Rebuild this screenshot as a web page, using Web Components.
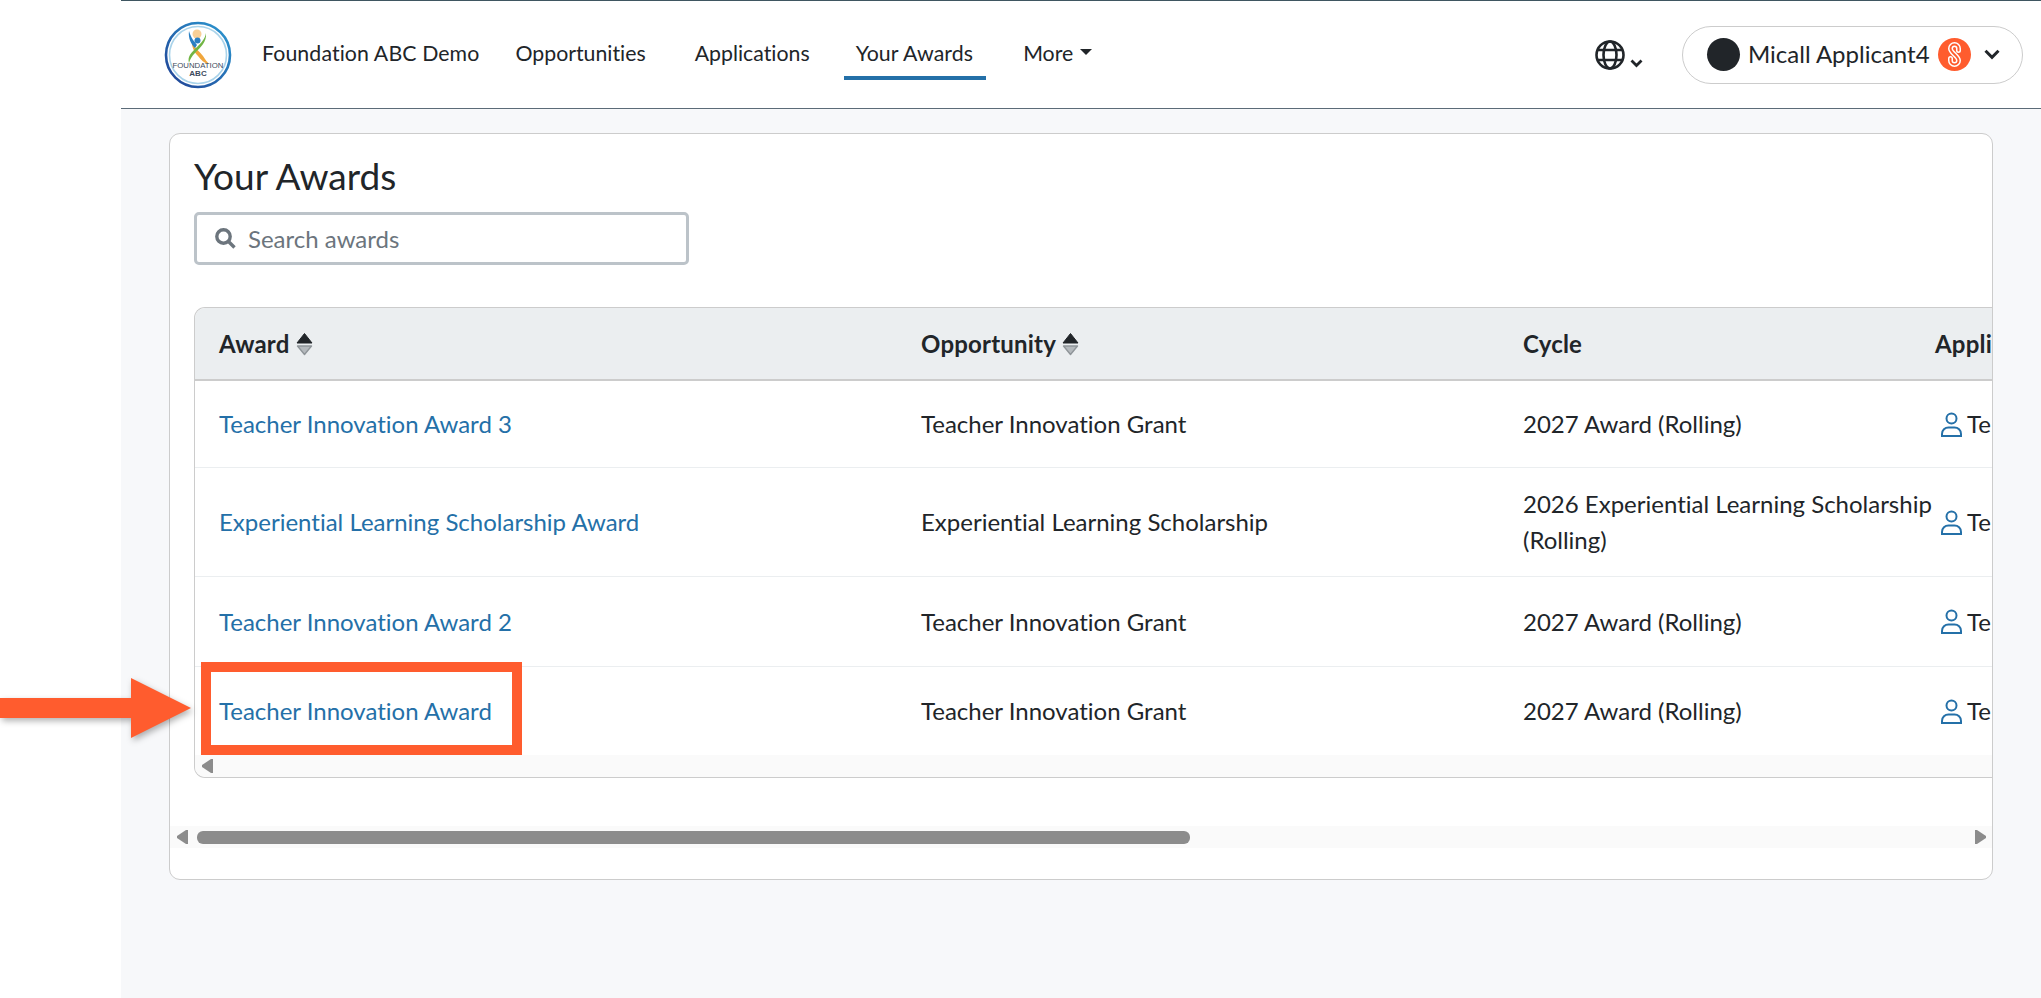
<!DOCTYPE html>
<html>
<head>
<meta charset="utf-8">
<title>Your Awards</title>
<style>
	html, body { margin: 0; height: 100%; }
	body { font-family: Lato, "Liberation Sans", sans-serif; font-variant-ligatures: none; font-variant-numeric: tabular-nums; color: #212529; background: #fff; overflow: hidden; }
</style>
</head>
<body>
<template id="personIcon">
	<svg width="21" height="25" viewBox="0 0 21 25" fill="none" stroke="#2470a8" stroke-width="2"><circle cx="10.500" cy="6.500" r="5"/><path d="M1 24v-2c0-4 3-6.500 6.500-6.500h6c3.500 0 6.500 2.500 6.500 6.500v2z"/></svg>
</template>

<app-shell>
	<nav-bar></nav-bar>
	<award-card>
		<awards-table>
			<award-row slot="rows" style="--row-h:87px" award="Teacher Innovation Award 3" opportunity="Teacher Innovation Grant" cycle="2027 Award (Rolling)"></award-row>
			<award-row slot="rows" style="--row-h:109px" award="Experiential Learning Scholarship Award" opportunity="Experiential Learning Scholarship" cycle="2026 Experiential Learning Scholarship (Rolling)"></award-row>
			<award-row slot="rows" style="--row-h:90px" award="Teacher Innovation Award 2" opportunity="Teacher Innovation Grant" cycle="2027 Award (Rolling)"></award-row>
			<award-row slot="rows" style="--row-h:88px" last award="Teacher Innovation Award" opportunity="Teacher Innovation Grant" cycle="2027 Award (Rolling)"></award-row>
		</awards-table>
	</award-card>
	<callout-marker></callout-marker>
</app-shell>

<script>
class AppShell extends HTMLElement {
	constructor() {
		super();
		this.attachShadow({ mode: 'open' });
		this.shadowRoot.innerHTML = `
			<style>
				:host { display: block; height: 100vh; position: relative; overflow: hidden; }
				#main { margin-left: 121px; height: 100%; background: #f7f8fa; }
			</style>
			<div id="main">
				<slot></slot>
			</div>
		`;
	}
}

class NavBar extends HTMLElement {
	constructor() {
		super();
		this.attachShadow({ mode: 'open' });
		this.shadowRoot.innerHTML = `
			<style>
				:host { display: flex; align-items: center; height: 107px; background: #fff; border-top: 1px solid #3f5661; border-bottom: 1px solid #5b6b78; font-size: 21.3px; }
				#logo { margin-left: 43px; flex: none; display: block; }
				a { color: #212529; text-decoration: none; white-space: nowrap; }
				#brand { margin-left: 30px; padding-bottom: 3px; letter-spacing: 0.1px; }
				#links { display: flex; align-items: center; margin-left: 24px; }
				.link { display: flex; align-items: center; padding: 1px 12px 0; margin-right: 25px; height: 50px; box-sizing: border-box; border-bottom: 4px solid transparent; }
				.link:nth-child(2) { margin-right: 22px; }
				.link.on { border-bottom-color: #2470a8; letter-spacing: 0.1px; padding-right: 13px; }
				.caret { display: inline-block; margin-left: 7px; border-top: 6px solid #212529; border-left: 6px solid transparent; border-right: 6px solid transparent; position: relative; top: -1px; }
				#right { margin-left: auto; display: flex; align-items: center; margin-right: 18px; }
				#globe { display: flex; align-items: flex-end; margin-right: 39px; }
				#pill { display: flex; align-items: center; height: 58px; box-sizing: border-box; width: 341px; padding-left: 24px; border: 1px solid #ccc; border-radius: 29px; }
				#avatar { width: 33px; height: 33px; border-radius: 50%; background: #212529; flex: none; }
				#name { margin-left: 8px; font-size: 24px; white-space: nowrap; padding-bottom: 3px; }
				#badge { margin-left: 8px; flex: none; display: block; }
				#chev { margin-left: 13px; flex: none; display: block; }
			</style>
			<svg id="logo" width="68" height="68" viewBox="0 0 68 68">
				<defs>
					<linearGradient id="ring" x1="0" y1="1" x2="1" y2="0"><stop offset="0" stop-color="#1f3f93"/><stop offset="1" stop-color="#2c9ad2"/></linearGradient>
				</defs>
				<circle cx="34" cy="34" r="32" fill="#fff" stroke="url(#ring)" stroke-width="2.6"/>
				<circle cx="34" cy="34" r="28.5" fill="none" stroke="#a9d3ea" stroke-width="1.6"/>
				<circle cx="33" cy="13" r="4.500" fill="#f8cf96"/>
				<path d="M28 22c3 5 8 9 11 13 2 3 4 6 6 8-5-1-8-4-11-8-3-3-6-8-6-13z" fill="#f0a63c"/>
				<path d="M25 10c2 7 5 10 8 14l-2 3c-4-4-7-10-6-17z" fill="#2a7fc2"/>
				<path d="M42 12c1 9-6 15-11 20-3 3-5 6-6 10-2-7 3-11 8-16 4-4 8-8 9-14z" fill="#71b544"/>
				<circle cx="33.500" cy="19.500" r="3" fill="#2a7fc2"/>
				<text x="34" y="47" text-anchor="middle" font-family="'Liberation Sans',sans-serif" font-size="7.800" fill="#3b4a5c">FOUNDATION</text>
				<text x="34" y="55" text-anchor="middle" font-family="'Liberation Sans',sans-serif" font-size="8" font-weight="700" fill="#3b4a5c">ABC</text>
			</svg>
			<a id="brand">Foundation ABC Demo</a>
			<div id="links">
				<a class="link">Opportunities</a>
				<a class="link">Applications</a>
				<a class="link on">Your Awards</a>
				<a class="link">More<span class="caret"></span></a>
			</div>
			<div id="right">
				<div id="globe">
					<svg width="30" height="30" viewBox="0 0 30 30" fill="none" stroke="#212529" stroke-width="2.600"><circle cx="15" cy="15" r="13.500"/><ellipse cx="15" cy="15" rx="6.500" ry="13.500"/><path d="M3 10h24M3 20h24"/></svg>
					<svg width="13" height="9" viewBox="0 0 13 9" fill="none" stroke="#212529" stroke-width="2.800" style="margin:0 0 2px 5px"><path d="M1.500 1.500l5 5 5-5"/></svg>
				</div>
				<div id="pill">
					<span id="avatar"></span>
					<span id="name">Micall Applicant4</span>
					<svg id="badge" width="33" height="33" viewBox="0 0 33 33"><circle cx="16.500" cy="16.500" r="16.500" fill="#ff5c2e"/><g fill="none" stroke-linecap="round"><path d="M20.500 12.500V10.500a4 4 0 0 0-8 0c0 4.500 8 7.500 8 12a4 4 0 0 1-8 0V20.500" stroke="#fff" stroke-width="5"/><path d="M20.500 12.500V10.500a4 4 0 0 0-8 0c0 4.500 8 7.500 8 12a4 4 0 0 1-8 0V20.500" stroke="#ff5c2e" stroke-width="2"/></g></svg>
					<svg id="chev" width="16" height="11" viewBox="0 0 16 11" fill="none" stroke="#212529" stroke-width="3"><path d="M1.500 1.800l6.500 6.500 6.500-6.500"/></svg>
				</div>
			</div>
		`;
	}
}

class AwardCard extends HTMLElement {
	constructor() {
		super();
		this.attachShadow({ mode: 'open' });
		this.shadowRoot.innerHTML = `
			<style>
				:host { display: block; box-sizing: border-box; width: 1824px; height: 747px; margin: 24px 0 0 48px; background: #fff; border: 1px solid #ccc; border-radius: 11px; position: relative; overflow: hidden; }
				h1 { font-size: 37px; font-weight: 400; line-height: 40px; margin: 0; }
				#top { padding: 22px 0 0 24px; }
			</style>
			<div id="top">
				<h1>Your Awards</h1>
				<search-box></search-box>
			</div>
			<slot></slot>
			<scroll-track id="outer" thumb="9,993"></scroll-track>
		`;
	}
}

class SearchBox extends HTMLElement {
	constructor() {
		super();
		this.attachShadow({ mode: 'open' });
		this.shadowRoot.innerHTML = `
			<style>
				:host { display: flex; align-items: center; box-sizing: border-box; width: 495px; height: 53px; margin-top: 16px; border: 3px solid #bcc3c9; border-radius: 5px; padding-left: 18px; }
				svg { flex: none; display: block; }
				span { margin-left: 12px; font-size: 24px; color: #6c757d; }
			</style>
			<svg width="21" height="21" viewBox="0 0 21 21" fill="none" stroke="#6c757d" stroke-width="3.400"><circle cx="8.500" cy="8.500" r="6.700"/><path d="M13.500 13.500l6 6"/></svg>
			<span>Search awards</span>
		`;
	}
}

class AwardsTable extends HTMLElement {
	constructor() {
		super();
		this.attachShadow({ mode: 'open' });
		this.shadowRoot.innerHTML = `
			<style>
				:host { display: block; box-sizing: border-box; margin: 42px 0 0 24px; width: 1798px; height: 471px; border: 1px solid #ccc; border-right: 0; border-radius: 11px 0 0 11px; overflow: hidden; position: relative; }
				#head { display: grid; grid-template-columns: 702px 602px 412px 1fr; align-items: center; height: 71px; background: #ebeef0; border-bottom: 2px solid #ccc; font-size: 24px; font-weight: 700; letter-spacing: 0.2px; white-space: nowrap; overflow: hidden; }
				#head div { padding-left: 24px; display: flex; align-items: center; }
				#head svg { margin-left: 6px; display: block; }
				#head div:first-child svg { margin-left: 7px; }
			</style>
			<div id="head">
				<div>Award<svg width="17" height="24" viewBox="0 0 17 24"><path d="M8.500 1.500l7.500 9.500H1z" fill="#212529" stroke="#212529" stroke-linejoin="round"/><path d="M1.500 14h14l-7 8.500z" fill="#b4b9bd" stroke="#8f9599" stroke-width="1.400" stroke-linejoin="round"/></svg></div>
				<div>Opportunity<svg width="17" height="24" viewBox="0 0 17 24"><path d="M8.500 1.500l7.500 9.500H1z" fill="#212529" stroke="#212529" stroke-linejoin="round"/><path d="M1.500 14h14l-7 8.500z" fill="#b4b9bd" stroke="#8f9599" stroke-width="1.400" stroke-linejoin="round"/></svg></div>
				<div>Cycle</div>
				<div>Appli</div>
			</div>
			<slot name="rows"></slot>
			<scroll-track thumb=""></scroll-track>
		`;
	}
}

class AwardRow extends HTMLElement {
	constructor() {
		super();
		this.attachShadow({ mode: 'open' });
		this.shadowRoot.innerHTML = `
			<style>
				:host { display: grid; grid-template-columns: 702px 602px 412px 1fr; align-items: center; height: var(--row-h); box-sizing: border-box; border-bottom: 1px solid #ebeef0; font-size: 24px; line-height: 36px; overflow: hidden; }
				:host([last]) { border-bottom: 0; }
				.cell { padding-left: 24px; }
				a { color: #2470a8; text-decoration: none; }
				#who { display: flex; align-items: center; gap: 5px; padding-left: 30px; }
				#who svg { display: block; flex: none; }
				#cycle { margin-right: -24px; }
			</style>
			<div class="cell"><a id="award"></a></div>
			<div class="cell" id="opp"></div>
			<div class="cell" id="cycle"></div>
			<div class="cell" id="who"><span>Te</span></div>
		`;
		const person = document.getElementById('personIcon').content.cloneNode(true);
		const who = this.shadowRoot.querySelector('#who');
		who.insertBefore(person, who.firstChild);
	}

	connectedCallback() {
		this.shadowRoot.querySelector('#award').textContent = this.getAttribute('award');
		this.shadowRoot.querySelector('#opp').textContent = this.getAttribute('opportunity');
		this.shadowRoot.querySelector('#cycle').textContent = this.getAttribute('cycle');
	}
}

class ScrollTrack extends HTMLElement {
	constructor() {
		super();
		this.attachShadow({ mode: 'open' });
		this.shadowRoot.innerHTML = `
			<style>
				:host { display: flex; align-items: center; height: 22px; background: #fafafa; }
				:host(#outer) { margin-top: 48px; }
				#thumb { height: 13px; background: #8c8c8c; border-radius: 6px; }
				svg { display: block; flex: none; }
				#left { margin-left: 7px; }
				#right { margin-left: auto; margin-right: 6px; }
			</style>
			<svg id="left" width="11" height="14" viewBox="0 0 11 14"><path d="M11 0v14H9L0 8V6l9-6z" fill="#8c8c8c"/></svg>
			<div id="thumb"></div>
			<svg id="right" width="11" height="14" viewBox="0 0 11 14"><path d="M0 0v14h2l9-6V6L2 0z" fill="#8c8c8c"/></svg>
		`;
	}

	connectedCallback() {
		const thumb = this.shadowRoot.querySelector('#thumb');
		const value = this.getAttribute('thumb');
		if (value) {
			const [gap, width] = value.split(',');
			thumb.style.marginLeft = gap + 'px';
			thumb.style.width = width + 'px';
		} else {
			thumb.style.display = 'none';
			this.shadowRoot.querySelector('#right').style.display = 'none';
		}
	}
}

// the orange arrow and box drawn over the screenshot
class CalloutMarker extends HTMLElement {
	constructor() {
		super();
		this.attachShadow({ mode: 'open' });
		this.shadowRoot.innerHTML = `
			<style>
				:host { display: block; position: absolute; left: 0; top: 0; pointer-events: none; }
				#box { position: absolute; left: 201px; top: 662px; width: 321px; height: 93px; box-sizing: border-box; border: 10px solid #ff5c2e; }
				svg { position: absolute; left: 0; top: 672px; overflow: visible; filter: drop-shadow(2px 3px 3px rgba(0,0,0,0.3)); }
			</style>
			<div id="box"></div>
			<svg width="192" height="72" viewBox="0 0 192 72"><path d="M0 26h131V6l60 30-60 30V46H0z" fill="#ff5c2e"/></svg>
		`;
	}
}

customElements.define('app-shell', AppShell);
customElements.define('nav-bar', NavBar);
customElements.define('award-card', AwardCard);
customElements.define('search-box', SearchBox);
customElements.define('awards-table', AwardsTable);
customElements.define('award-row', AwardRow);
customElements.define('scroll-track', ScrollTrack);
customElements.define('callout-marker', CalloutMarker);
</script>
</body>
</html>
